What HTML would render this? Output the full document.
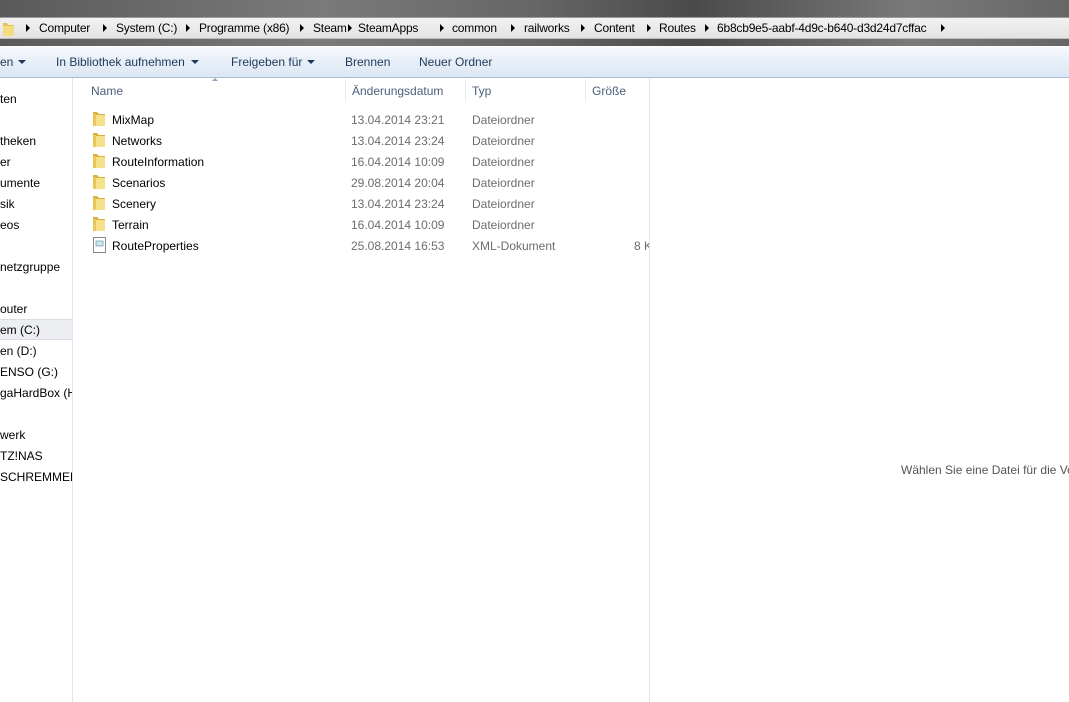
<!DOCTYPE html>
<html><head><meta charset="utf-8"><style>
*{margin:0;padding:0;box-sizing:border-box}
body{width:1069px;height:702px;overflow:hidden;background:#fff;font-family:"Liberation Sans",sans-serif;font-size:12px;color:#1e395b;position:relative}
.a{position:absolute;white-space:nowrap}
#bg{left:0;top:0;width:1069px;height:46px;background:linear-gradient(90deg,#5a5a5a,#7a7a7a 30%,#666 50%,#4a4a4a 65%,#7a7a7a 85%,#666);}
#addr{left:0;top:17px;width:1069px;height:22px;background:linear-gradient(#f2f2f2,#e3e3e3);border-top:1px solid #9a9a9a;border-bottom:1px solid #bdbdbd;color:#000;font-size:12px;letter-spacing:-0.2px}
#addr span{position:absolute;top:3px}
.tri{width:0;height:0;border-top:4px solid transparent;border-bottom:4px solid transparent;border-left:4px solid #000;position:absolute;top:6px}
#tb{left:0;top:46px;width:1069px;height:32px;background:linear-gradient(#f6f9fd,#e7eef7 50%,#dce7f4);border-top:1px solid #fff;border-bottom:1px solid #a8bdd6;color:#1e395b}
#tb span{position:absolute;top:8px}
.dd{width:0;height:0;border-left:4px solid transparent;border-right:4px solid transparent;border-top:4px solid #1e395b;position:absolute;top:13px}
#nav{left:0;top:78px;width:73px;height:624px;border-right:1px solid #dde5ee;background:#fff;color:#000;overflow:hidden}
#nav div{position:absolute;left:0}
.h{color:#4c607a;top:84px}
.sep{position:absolute;top:79px;width:1px;height:22px;background:#e3e8ef}
.row{color:#000}
.g{color:#6d6d6d}
</style></head><body>
<div class="a" id="bg"></div>
<div class="a" id="addr">
<svg style="position:absolute;left:1px;top:2px" width="14" height="17"><path d="M2 3h4l1 2h6v11H2z" fill="#e8c24a"/><path d="M2 6h11v10H2z" fill="#f5dc7e"/></svg>
<i class="tri" style="left:26px"></i><span style="left:39px">Computer</span>
<i class="tri" style="left:103px"></i><span style="left:116px">System (C:)</span>
<i class="tri" style="left:186px"></i><span style="left:199px">Programme (x86)</span>
<i class="tri" style="left:300px"></i><span style="left:313px">Steam</span>
<i class="tri" style="left:348px"></i><span style="left:358px">SteamApps</span>
<i class="tri" style="left:440px"></i><span style="left:452px">common</span>
<i class="tri" style="left:511px"></i><span style="left:524px">railworks</span>
<i class="tri" style="left:581px"></i><span style="left:594px">Content</span>
<i class="tri" style="left:647px"></i><span style="left:659px">Routes</span>
<i class="tri" style="left:705px"></i><span style="left:717px">6b8cb9e5-aabf-4d9c-b640-d3d24d7cffac</span>
<i class="tri" style="left:941px"></i>
</div>
<div class="a" id="tb">
<span style="left:0">en</span><i class="dd" style="left:18px"></i>
<span style="left:56px">In Bibliothek aufnehmen</span><i class="dd" style="left:191px"></i>
<span style="left:231px">Freigeben für</span><i class="dd" style="left:307px"></i>
<span style="left:345px">Brennen</span>
<span style="left:419px">Neuer Ordner</span>
</div>
<div class="a" id="nav">
<div style="top:14px">ten</div>
<div style="top:56px">theken</div>
<div style="top:77px">er</div>
<div style="top:98px">umente</div>
<div style="top:119px">sik</div>
<div style="top:140px">eos</div>
<div style="top:182px">netzgruppe</div>
<div style="top:224px">outer</div>
<div style="top:241px;width:72px;height:21px;background:#eceef1;border-top:1px solid #d9dde3;border-bottom:1px solid #d9dde3"></div>
<div style="top:245px">em (C:)</div>
<div style="top:266px">en (D:)</div>
<div style="top:287px">ENSO (G:)</div>
<div style="top:308px">gaHardBox (H:</div>
<div style="top:350px">werk</div>
<div style="top:371px">TZ!NAS</div>
<div style="top:392px">SCHREMMER</div>
</div>
<div class="a" style="left:212px;top:78px;width:0;height:0;border-left:3px solid transparent;border-right:3px solid transparent;border-bottom:3px solid #8fa4bf"></div>
<div class="a h" style="left:91px">Name</div>
<div class="sep" style="left:345px"></div>
<div class="a h" style="left:352px">Änderungsdatum</div>
<div class="sep" style="left:465px"></div>
<div class="a h" style="left:472px">Typ</div>
<div class="sep" style="left:585px"></div>
<div class="a h" style="left:592px">Größe</div>
<div class="a" style="left:649px;top:78px;width:1px;height:624px;background:#dbe4ee"></div>

<svg class="a" style="left:92px;top:111px" width="16" height="150">
<g id="f"><path d="M1 1h4l2 2h6v12H1z" fill="#d9b13a"/><path d="M3 4h10v11H3z" fill="#f7e08a"/><path d="M1 3h3v12H1z" fill="#e9c658"/></g>
<use href="#f" y="21"/><use href="#f" y="42"/><use href="#f" y="63"/><use href="#f" y="84"/><use href="#f" y="105"/>
<rect x="1.5" y="126.5" width="12" height="15" fill="#fff" stroke="#8a8a8a"/><rect x="4" y="130" width="7" height="5" fill="#cfe6ef" stroke="#5b9bb5" stroke-width=".7"/>
</svg>
<div class="a row" style="left:112px;top:113px">MixMap</div>
<div class="a row" style="left:112px;top:134px">Networks</div>
<div class="a row" style="left:112px;top:155px">RouteInformation</div>
<div class="a row" style="left:112px;top:176px">Scenarios</div>
<div class="a row" style="left:112px;top:197px">Scenery</div>
<div class="a row" style="left:112px;top:218px">Terrain</div>
<div class="a row" style="left:112px;top:239px">RouteProperties</div>
<div class="a g" style="left:351px;top:113px">13.04.2014 23:21</div>
<div class="a g" style="left:351px;top:134px">13.04.2014 23:24</div>
<div class="a g" style="left:351px;top:155px">16.04.2014 10:09</div>
<div class="a g" style="left:351px;top:176px">29.08.2014 20:04</div>
<div class="a g" style="left:351px;top:197px">13.04.2014 23:24</div>
<div class="a g" style="left:351px;top:218px">16.04.2014 10:09</div>
<div class="a g" style="left:351px;top:239px">25.08.2014 16:53</div>
<div class="a g" style="left:472px;top:113px">Dateiordner</div>
<div class="a g" style="left:472px;top:134px">Dateiordner</div>
<div class="a g" style="left:472px;top:155px">Dateiordner</div>
<div class="a g" style="left:472px;top:176px">Dateiordner</div>
<div class="a g" style="left:472px;top:197px">Dateiordner</div>
<div class="a g" style="left:472px;top:218px">Dateiordner</div>
<div class="a g" style="left:472px;top:239px">XML-Dokument</div>
<div class="a g" style="left:634px;top:239px;width:15px;overflow:hidden">8 KB</div>
<div class="a g" style="left:901px;top:463px;color:#555;width:168px;overflow:hidden">Wählen Sie eine Datei für die Vorschau aus.</div>
</body></html>
